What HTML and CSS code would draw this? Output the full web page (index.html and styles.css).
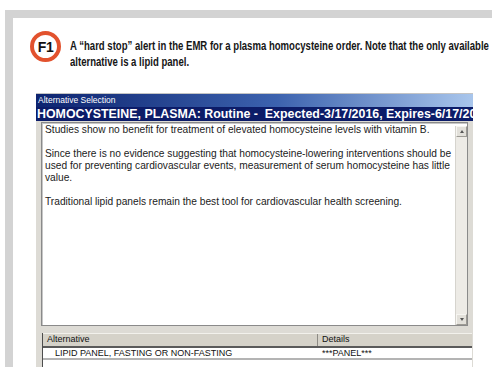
FILE: index.html
```html
<!DOCTYPE html>
<html>
<head>
<meta charset="utf-8">
<title>F1 - Alternative Selection</title>
<link rel="stylesheet" href="styles.css">
</head>
<body>
<div class="frame">
    <div class="fig-head">
        <span class="badge">F1</span>
        <p class="caption">A “hard stop” alert in the EMR for a plasma homocysteine order. Note that the only available<br>alternative is a lipid panel.</p>
    </div>
    <div class="dialog">
        <div class="titlebar">Alternative Selection</div>
        <div class="order">HOMOCYSTEINE, PLASMA: Routine - &nbsp;Expected-3/17/2016, Expires-6/17/2016</div>
        <div class="msgbox">
            <div class="msgtext">
                <p>Studies show no benefit for treatment of elevated homocysteine levels with vitamin B.</p>
                <p>Since there is no evidence suggesting that homocysteine-lowering interventions should be used for preventing cardiovascular events, measurement of serum homocysteine has little value.</p>
                <p>Traditional lipid panels remain the best tool for cardiovascular health screening.</p>
            </div>
            <div class="scroll">
                <span class="btn"><span class="arrow up"></span></span>
                <span class="track"></span>
                <span class="btn"><span class="arrow down"></span></span>
            </div>
        </div>
        <div class="list">
            <div class="list-head">
                <span class="col-alt">Alternative</span>
                <span class="col-det">Details</span>
            </div>
            <div class="list-row">
                <span class="col-alt">LIPID PANEL, FASTING OR NON-FASTING</span>
                <span class="col-det">***PANEL***</span>
            </div>
        </div>
    </div>
</div>
</body>
</html>
```

FILE: styles.css
```css
body,div,p{margin:0;padding:0;}
body{background:#fff;color:#111;font:12px/1.3 "Liberation Sans",Arial,sans-serif;}

.frame{width:479px;height:349px;margin:10px 0 0 5px;border-top:8px solid #d3d3d3;border-left:8px solid #d3d3d3;}

/* figure heading */
.fig-head{display:flex;align-items:flex-start;height:75px;padding:13px 0 0 17px;box-sizing:border-box;}
.badge{flex-shrink:0;display:flex;align-items:center;justify-content:center;width:23px;height:23px;border:4px solid #e2522e;border-radius:50%;font:bold 14px "Liberation Sans",Arial,sans-serif;color:#111;letter-spacing:-0.5px;}
/* no condensed face installed: squeeze the bold face instead */
.caption{flex-shrink:0;margin:7px 0 0 9px;font:bold 12.5px/16px "Liberation Sans",Arial,sans-serif;white-space:nowrap;color:#161616;transform:scaleX(.765);transform-origin:0 0;}

/* screenshot of the EMR window */
.dialog{display:flex;flex-direction:column;width:437px;height:274px;margin-left:23px;background:#dddbd5;border-top:1px solid #c4c4c4;box-sizing:border-box;}
.titlebar{height:13px;padding-left:2px;background:linear-gradient(to right,#0d2470,#3c62ae 55%,#a9c6ec);color:#fff;font:8.5px/13px "Liberation Sans",Arial,sans-serif;}
.order{height:14px;padding-left:1px;background:#0c1c68;color:#fff;font:bold 12.4px/14px "Liberation Sans",Arial,sans-serif;white-space:nowrap;overflow:hidden;}

.msgbox{display:flex;height:202px;margin:1px 5px 0 5px;background:#fff;border:1px solid #8a8a8a;box-shadow:inset 1px 1px 0 #c6c6c6;}
.msgtext{flex:1;padding:1px 0 0 3px;font:10.2px/12px "Liberation Sans",Arial,sans-serif;color:#1b1b1b;}
.msgtext p{margin-bottom:12px;}

.scroll{display:flex;flex-direction:column;width:11px;margin-top:3px;background:#edebe6;border-left:1px solid #d6d4ce;}
.scroll .track{flex:1;}
.scroll .btn{display:flex;align-items:center;justify-content:center;height:9px;background:#e2e0da;border:1px solid #f6f5f1;border-right-color:#9c9a94;border-bottom-color:#9c9a94;}
.arrow{width:0;height:0;border-left:2.5px solid transparent;border-right:2.5px solid transparent;}
.arrow.up{border-bottom:3px solid #555;}
.arrow.down{border-top:3px solid #555;}

.list{flex:1;margin:7px 1px 0 6px;background:#fff;border-left:1px solid #4d4d4d;font:9px/11px "Liberation Sans",Arial,sans-serif;}
.list-head{display:flex;height:12px;background:#d5d2c9;border-top:1px solid #f2f1ec;border-bottom:2px solid #5a5a5a;}
.list-head .col-alt{border-right:1px solid #8d8b85;}
.list-row{display:flex;height:10px;line-height:10px;border-bottom:2px solid #b4b4b4;}
.col-alt{width:270px;padding-left:4px;}
.list-row .col-alt{width:262px;padding-left:12px;}
.col-det{padding-left:4px;}
.list-row .col-det{padding-left:5px;}
```
